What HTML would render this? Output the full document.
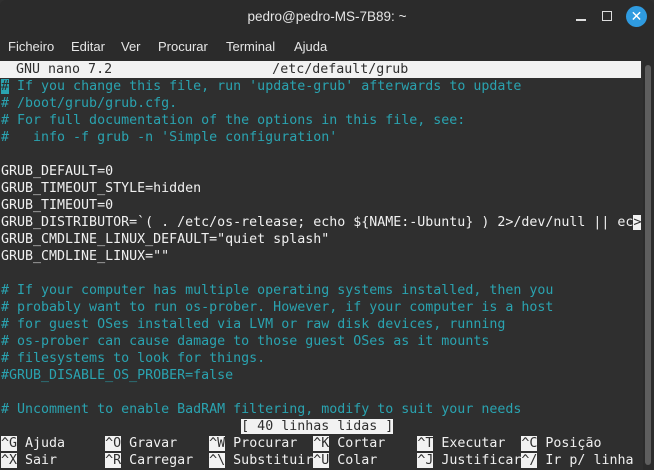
<!DOCTYPE html>
<html><head><meta charset="utf-8"><style>
*{margin:0;padding:0;box-sizing:border-box}
body{width:654px;height:470px;background:#2f2f2f;overflow:hidden;position:relative;font-family:"Liberation Sans","DejaVu Sans",sans-serif}
#tb{position:absolute;left:0;top:0;width:654px;height:34px;background:#2b2b2b;color:#e6e6e6;font-size:13.5px;text-align:center;line-height:34px;border-radius:6px 6px 0 0}
#menu{position:absolute;left:0;top:34px;width:654px;height:27px;background:#2b2b2b;color:#e6e6e6;font-size:13px;line-height:25px}
#menu span{position:absolute;top:0}
#term{position:absolute;left:0;top:61px;width:643px;height:409px;background:#2f2f2f;font-family:"DejaVu Sans Mono",monospace;font-size:13.3px;color:#f0f0f0}
.r{position:absolute;left:1px;height:17px;line-height:17px;white-space:pre}
.c{color:#2aa3b0}
.inv{background:#f2f2f2;color:#2f2f2f}
#sb{position:absolute;left:643px;top:61px;width:11px;height:409px;background:#2b2b2b}
#th{position:absolute;left:645px;top:65px;width:6px;height:400px;background:#5e5e5e;border-radius:3px}
</style></head><body>
<div id="tb">pedro@pedro-MS-7B89: ~</div>
<div style="position:absolute;left:576px;top:19px;width:10px;height:1.5px;background:#ddd"></div>
<div style="position:absolute;left:602px;top:11px;width:10px;height:10px;border:1.5px solid #ddd"></div>
<div style="position:absolute;left:626px;top:6px;width:21px;height:21px;border-radius:50%;background:#2f9be0;color:#fff;font-size:14px;font-weight:bold;text-align:center;line-height:21px">✕</div>
<div id="menu"><span style="left:8px">Ficheiro</span><span style="left:71px">Editar</span><span style="left:121px">Ver</span><span style="left:158px">Procurar</span><span style="left:226px">Terminal</span><span style="left:294px">Ajuda</span></div>
<div id="term">
<div class="r inv" style="top:0;left:0;width:641px">  GNU nano 7.2                    /etc/default/grub</div>
<div class="r c" style="top:17px"><span class="inv" style="background:#2aa3b0;color:#2f2f2f">#</span> If you change this file, run 'update-grub' afterwards to update</div>
<div class="r c" style="top:34px"># /boot/grub/grub.cfg.</div>
<div class="r c" style="top:51px"># For full documentation of the options in this file, see:</div>
<div class="r c" style="top:68px">#   info -f grub -n 'Simple configuration'</div>
<div class="r" style="top:102px">GRUB_DEFAULT=0</div>
<div class="r" style="top:119px">GRUB_TIMEOUT_STYLE=hidden</div>
<div class="r" style="top:136px">GRUB_TIMEOUT=0</div>
<div class="r" style="top:153px">GRUB_DISTRIBUTOR=`( . /etc/os-release; echo ${NAME:-Ubuntu} ) 2&gt;/dev/null || ec<span class="inv">&gt;</span></div>
<div class="r" style="top:170px">GRUB_CMDLINE_LINUX_DEFAULT="quiet splash"</div>
<div class="r" style="top:187px">GRUB_CMDLINE_LINUX=""</div>
<div class="r c" style="top:221px"># If your computer has multiple operating systems installed, then you</div>
<div class="r c" style="top:238px"># probably want to run os-prober. However, if your computer is a host</div>
<div class="r c" style="top:255px"># for guest OSes installed via LVM or raw disk devices, running</div>
<div class="r c" style="top:272px"># os-prober can cause damage to those guest OSes as it mounts</div>
<div class="r c" style="top:289px"># filesystems to look for things.</div>
<div class="r c" style="top:306px">#GRUB_DISABLE_OS_PROBER=false</div>
<div class="r c" style="top:340px"># Uncomment to enable BadRAM filtering, modify to suit your needs</div>
<div class="r" style="top:357px">                              <span class="inv">[ 40 linhas lidas ]</span></div>
<div class="r" style="top:374px"><span class="inv">^G</span> Ajuda     <span class="inv">^O</span> Gravar    <span class="inv">^W</span> Procurar  <span class="inv">^K</span> Cortar    <span class="inv">^T</span> Executar  <span class="inv">^C</span> Posição</div>
<div class="r" style="top:391px"><span class="inv">^X</span> Sair      <span class="inv">^R</span> Carregar  <span class="inv">^\</span> Substituir<span class="inv">^U</span> Colar     <span class="inv">^J</span> Justificar<span class="inv">^/</span> Ir p/ linha</div>
</div>
<div id="sb"></div><div id="th"></div>
</body></html>
